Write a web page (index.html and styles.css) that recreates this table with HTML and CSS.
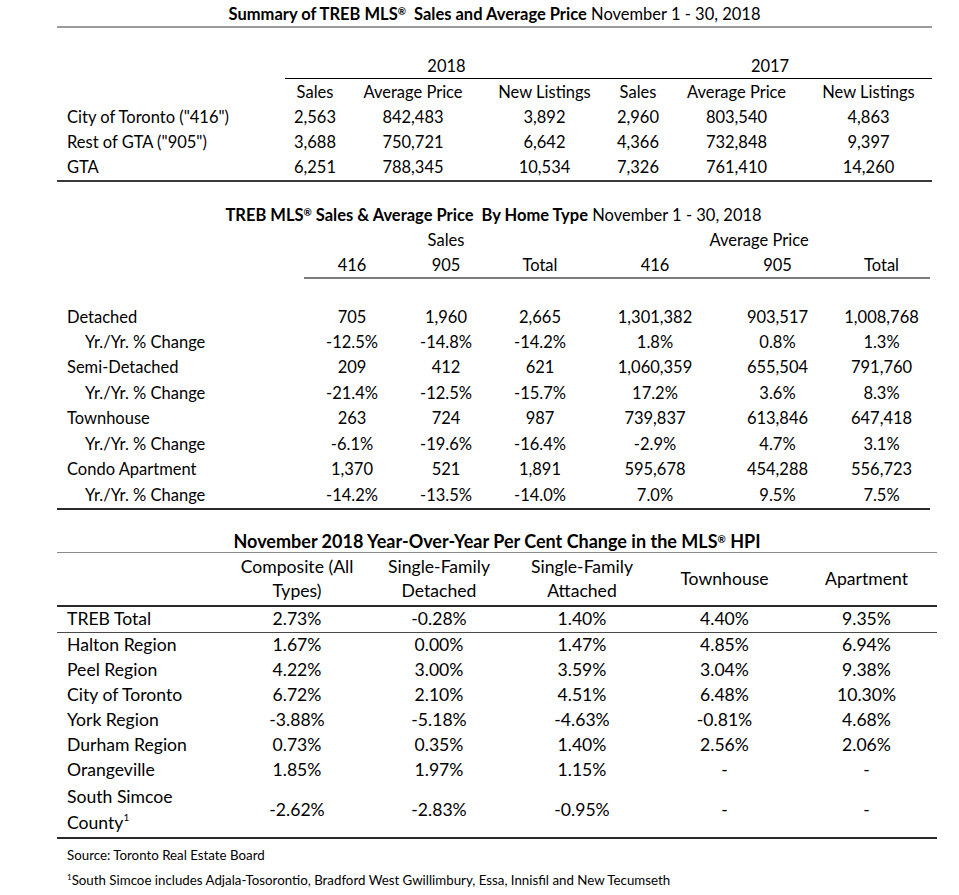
FILE: index.html
```html
<!DOCTYPE html>
<html lang="en">
<head>
<meta charset="utf-8">
<title>TREB MLS Summary November 2018</title>
<link rel="stylesheet" href="styles.css">
</head>
<body>
<div class="report">

  <table class="tbl t1">
    <colgroup>
      <col class="c-label1"><col class="c60"><col class="c136"><col class="c127"><col class="c60"><col class="c137"><col class="c127">
    </colgroup>
    <tr class="title-row">
      <td colspan="7" class="title"><b>Summary of TREB MLS<sup class="reg">®</sup>&nbsp; Sales and Average Price</b> November 1 - 30, 2018</td>
    </tr>
    <tr class="spacer1"><td colspan="7"></td></tr>
    <tr class="year-row">
      <td class="nb"></td>
      <td colspan="3" class="year">2018</td>
      <td colspan="3" class="year">2017</td>
    </tr>
    <tr class="hdr">
      <td></td><td>Sales</td><td>Average Price</td><td>New Listings</td><td>Sales</td><td>Average Price</td><td>New Listings</td>
    </tr>
    <tr class="row">
      <td class="label">City of Toronto ("416")</td><td>2,563</td><td>842,483</td><td>3,892</td><td>2,960</td><td>803,540</td><td>4,863</td>
    </tr>
    <tr class="row">
      <td class="label">Rest of GTA ("905")</td><td>3,688</td><td>750,721</td><td>6,642</td><td>4,366</td><td>732,848</td><td>9,397</td>
    </tr>
    <tr class="row last">
      <td class="label">GTA</td><td>6,251</td><td>788,345</td><td>10,534</td><td>7,326</td><td>761,410</td><td>14,260</td>
    </tr>
  </table>

  <table class="tbl t2">
    <colgroup>
      <col class="c-label2"><col class="c96"><col class="c92"><col class="c96"><col class="c134"><col class="c111"><col class="c97">
    </colgroup>
    <tr class="title-row2">
      <td colspan="7" class="title"><b>TREB MLS<sup class="reg">®</sup> Sales &amp; Average Price&nbsp; By Home Type</b> November 1 - 30, 2018</td>
    </tr>
    <tr class="group-row">
      <td></td><td colspan="3">Sales</td><td colspan="3">Average Price</td>
    </tr>
    <tr class="hdr2">
      <td class="nb"></td><td>416</td><td>905</td><td>Total</td><td>416</td><td>905</td><td>Total</td>
    </tr>
    <tr class="blank"><td colspan="7"></td></tr>
    <tr class="row"><td class="label">Detached</td><td>705</td><td>1,960</td><td>2,665</td><td>1,301,382</td><td>903,517</td><td>1,008,768</td></tr>
    <tr class="row"><td class="label sub">Yr./Yr. % Change</td><td>-12.5%</td><td>-14.8%</td><td>-14.2%</td><td>1.8%</td><td>0.8%</td><td>1.3%</td></tr>
    <tr class="row"><td class="label">Semi-Detached</td><td>209</td><td>412</td><td>621</td><td>1,060,359</td><td>655,504</td><td>791,760</td></tr>
    <tr class="row"><td class="label sub">Yr./Yr. % Change</td><td>-21.4%</td><td>-12.5%</td><td>-15.7%</td><td>17.2%</td><td>3.6%</td><td>8.3%</td></tr>
    <tr class="row"><td class="label">Townhouse</td><td>263</td><td>724</td><td>987</td><td>739,837</td><td>613,846</td><td>647,418</td></tr>
    <tr class="row"><td class="label sub">Yr./Yr. % Change</td><td>-6.1%</td><td>-19.6%</td><td>-16.4%</td><td>-2.9%</td><td>4.7%</td><td>3.1%</td></tr>
    <tr class="row"><td class="label">Condo Apartment</td><td>1,370</td><td>521</td><td>1,891</td><td>595,678</td><td>454,288</td><td>556,723</td></tr>
    <tr class="row last"><td class="label sub">Yr./Yr. % Change</td><td>-14.2%</td><td>-13.5%</td><td>-14.0%</td><td>7.0%</td><td>9.5%</td><td>7.5%</td></tr>
  </table>

  <table class="tbl t3">
    <colgroup>
      <col class="c170"><col class="c140"><col class="c144"><col class="c142"><col class="c143"><col class="c141">
    </colgroup>
    <tr class="title-row3">
      <td colspan="6" class="title"><b>November 2018 Year-Over-Year Per Cent Change in the MLS<sup class="reg">®</sup> HPI</b></td>
    </tr>
    <tr class="hdr3">
      <td></td><td>Composite (All<br>Types)</td><td>Single-Family<br>Detached</td><td>Single-Family<br>Attached</td><td>Townhouse</td><td>Apartment</td>
    </tr>
    <tr class="row total">
      <td class="label">TREB Total</td><td>2.73%</td><td>-0.28%</td><td>1.40%</td><td>4.40%</td><td>9.35%</td>
    </tr>
    <tr class="row"><td class="label">Halton Region</td><td>1.67%</td><td>0.00%</td><td>1.47%</td><td>4.85%</td><td>6.94%</td></tr>
    <tr class="row"><td class="label">Peel Region</td><td>4.22%</td><td>3.00%</td><td>3.59%</td><td>3.04%</td><td>9.38%</td></tr>
    <tr class="row"><td class="label">City of Toronto</td><td>6.72%</td><td>2.10%</td><td>4.51%</td><td>6.48%</td><td>10.30%</td></tr>
    <tr class="row"><td class="label">York Region</td><td>-3.88%</td><td>-5.18%</td><td>-4.63%</td><td>-0.81%</td><td>4.68%</td></tr>
    <tr class="row"><td class="label">Durham Region</td><td>0.73%</td><td>0.35%</td><td>1.40%</td><td>2.56%</td><td>2.06%</td></tr>
    <tr class="row"><td class="label">Orangeville</td><td>1.85%</td><td>1.97%</td><td>1.15%</td><td>-</td><td>-</td></tr>
    <tr class="row tall last"><td class="label">South Simcoe<br>County<sup class="fn">1</sup></td><td>-2.62%</td><td>-2.83%</td><td>-0.95%</td><td>-</td><td>-</td></tr>
  </table>

  <div class="notes">
    <p class="note">Source: Toronto Real Estate Board</p>
    <p class="note"><sup class="fn2">1</sup>South Simcoe includes Adjala-Tosorontio, Bradford West Gwillimbury, Essa, Innisfil and New Tecumseth</p>
  </div>

</div>
</body>
</html>
```

FILE: styles.css
```css
html, body {
  margin: 0;
  padding: 0;
  background: #ffffff;
}

body {
  font-family: "Lato", "Liberation Sans", sans-serif;
  font-size: 16.5px;
  color: #000000;
}

.report {
  padding-left: 57px;
}

.tbl {
  border-collapse: collapse;
  table-layout: fixed;
}

.tbl td {
  padding: 0;
  text-align: center;
  white-space: nowrap;
  vertical-align: middle;
  line-height: 20px;
}

.tbl td.label {
  text-align: left;
  padding-left: 10px;
}

.tbl td.sub {
  padding-left: 28px;
}

.title b {
  font-weight: 700;
}

.reg {
  font-size: 10px;
  vertical-align: 5px;
  line-height: 0;
  font-weight: 700;
}

/* Table 1 */
.t1 { width: 875px; }
.c-label1 { width: 228px; }
.c60 { width: 60px; }
.c136 { width: 136px; }
.c127 { width: 127px; }
.c137 { width: 137px; }

.t1 .title-row td {
  height: 25px;
  padding-top: 1px;
  border-bottom: 2px solid #9a9a9a;
}

.t1 .spacer1 td { height: 26px; }

.t1 .year-row td { height: 24px; }
.t1 .year-row td.year { border-bottom: 1px solid #000; }

.t1 .hdr td { height: 25px; }
.t1 .row td { height: 25px; }
.t1 .row.last td {
  height: 26px;
  border-bottom: 2px solid #3a3a3a;
}

/* Table 2 */
.t2 { width: 873px; }
.c-label2 { width: 247px; }
.c96 { width: 96px; }
.c92 { width: 92px; }
.c134 { width: 134px; }
.c111 { width: 111px; }
.c97 { width: 97px; }

.t2 .title-row2 td {
  height: 25px;
  padding-top: 20px;
}

.t2 .group-row td { height: 25px; }

.t2 .hdr2 td {
  height: 25px;
  border-bottom: 2px solid #7a7a7a;
}
.t2 .hdr2 td.nb { border-bottom: none; }

.t2 .blank td { height: 25px; }
.t2 .row td { height: 25.4px; }
.t2 .row.last td {
  height: 26px;
  border-bottom: 2px solid #2a2a2a;
}

/* Table 3 */
.t3 { width: 880px; font-size: 17.6px; }
.c170 { width: 170px; }
.c140 { width: 140px; }
.c144 { width: 144px; }
.c142 { width: 142px; }
.c143 { width: 143px; }
.c141 { width: 141px; }

.t3 .title-row3 td {
  height: 22px;
  padding-top: 20px;
  border-bottom: 1px solid #8a8a8a;
  font-size: 18px;
}

.t3 .hdr3 td {
  height: 52px;
  line-height: 24px;
  border-bottom: 2px solid #2a2a2a;
}

.t3 .row td { height: 25px; }
.t3 .row.total td {
  height: 25px;
  border-bottom: 1px solid #4a4a4a;
}
.t3 .row.tall td {
  height: 54px;
  line-height: 26px;
}
.t3 .row.last td {
  border-bottom: 2px solid #2a2a2a;
}

.fn {
  font-size: 10px;
  vertical-align: 8px;
  line-height: 0;
}

/* Notes */
.notes {
  padding-left: 10px;
  padding-top: 4px;
}

.note {
  margin: 0;
  font-size: 13.3px;
  line-height: 25px;
}

.fn2 {
  font-size: 8px;
  vertical-align: 5px;
  line-height: 0;
}
```
